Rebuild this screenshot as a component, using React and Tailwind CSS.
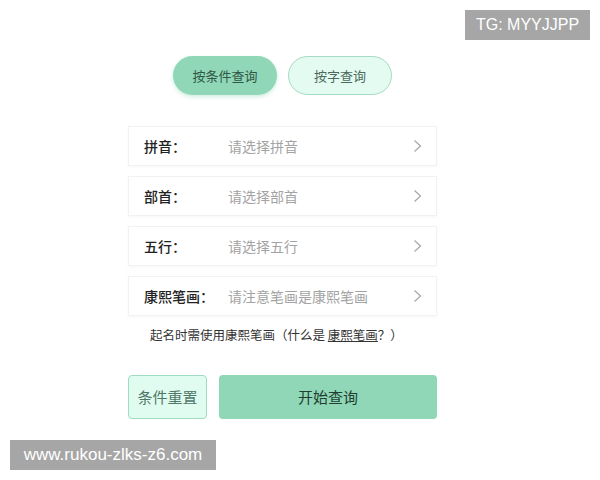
import React from 'react';

const rows = [
  { label: '拼音：', hint: '请选择拼音' },
  { label: '部首：', hint: '请选择部首' },
  { label: '五行：', hint: '请选择五行' },
  { label: '康熙笔画：', hint: '请注意笔画是康熙笔画' },
];

function Chevron() {
  return (
    <svg width="9" height="14" viewBox="0 0 9 14" fill="none">
      <path d="M1.5 1.5 L7.5 7 L1.5 12.5" stroke="#aaaaaa" strokeWidth="1.3" />
    </svg>
  );
}

export default function App() {
  return (
    <div
      className="relative w-[600px] h-[480px] bg-white overflow-hidden"
      style={{ fontFamily: '"Noto Sans CJK SC", "Noto Sans", sans-serif' }}
    >
      <div
        className="absolute left-[465px] top-[10px] w-[125px] h-[30px] bg-[#a6a6a6] text-white text-[16px] flex items-center justify-center"
        style={{ fontFamily: '"Liberation Sans", Arial, sans-serif' }}
      >
        TG: MYYJJPP
      </div>

      <div className="ml-[128px] w-[309px] pt-[56px]">
        {/* tabs */}
        <div className="flex justify-center gap-[11px]">
          <button className="w-[104px] h-[39px] rounded-full bg-[#8fd7b7] text-[#2f5646] text-[13px] shadow-[0_2px_4px_rgba(120,200,165,0.35)]">
            按条件查询
          </button>
          <button className="w-[104px] h-[39px] rounded-full bg-[#e3fbf0] border border-[#a6dac3] text-[#4b6a5d] text-[13px]">
            按字查询
          </button>
        </div>

        {/* fields */}
        <div className="mt-[31px] flex flex-col gap-[10px]">
          {rows.map((r) => (
            <div
              key={r.label}
              className="h-[40px] flex items-center pl-[15px] pr-[14px] bg-white border border-[#f2f2f2] shadow-[0_1px_3px_rgba(0,0,0,0.04)]"
            >
              <span className="w-[84px] text-[14px] text-[#222] font-medium">{r.label}</span>
              <span className="flex-1 text-[14px] text-[#a3a3a3]">{r.hint}</span>
              <Chevron />
            </div>
          ))}
        </div>

        <p className="mt-[10px] pl-[22px] text-[12.5px] text-[#333]">
          起名时需使用康熙笔画（什么是 <span className="underline">康熙笔画</span>？）
        </p>

        {/* actions */}
        <div className="mt-[30px] flex gap-[12px]">
          <button className="w-[79px] h-[44px] rounded-[4px] bg-[#e0fbef] border border-[#9edbc1] text-[#4f7868] text-[15px]">
            条件重置
          </button>
          <button className="flex-1 h-[44px] rounded-[4px] bg-[#8fd7b6] text-[#203e31] text-[15px]">
            开始查询
          </button>
        </div>
      </div>

      <div
        className="absolute left-[10px] top-[440px] w-[206px] h-[30px] bg-[#a6a6a6] text-white text-[17px] flex items-center justify-center"
        style={{ fontFamily: '"Liberation Sans", Arial, sans-serif' }}
      >
        www.rukou-zlks-z6.com
      </div>
    </div>
  );
}
